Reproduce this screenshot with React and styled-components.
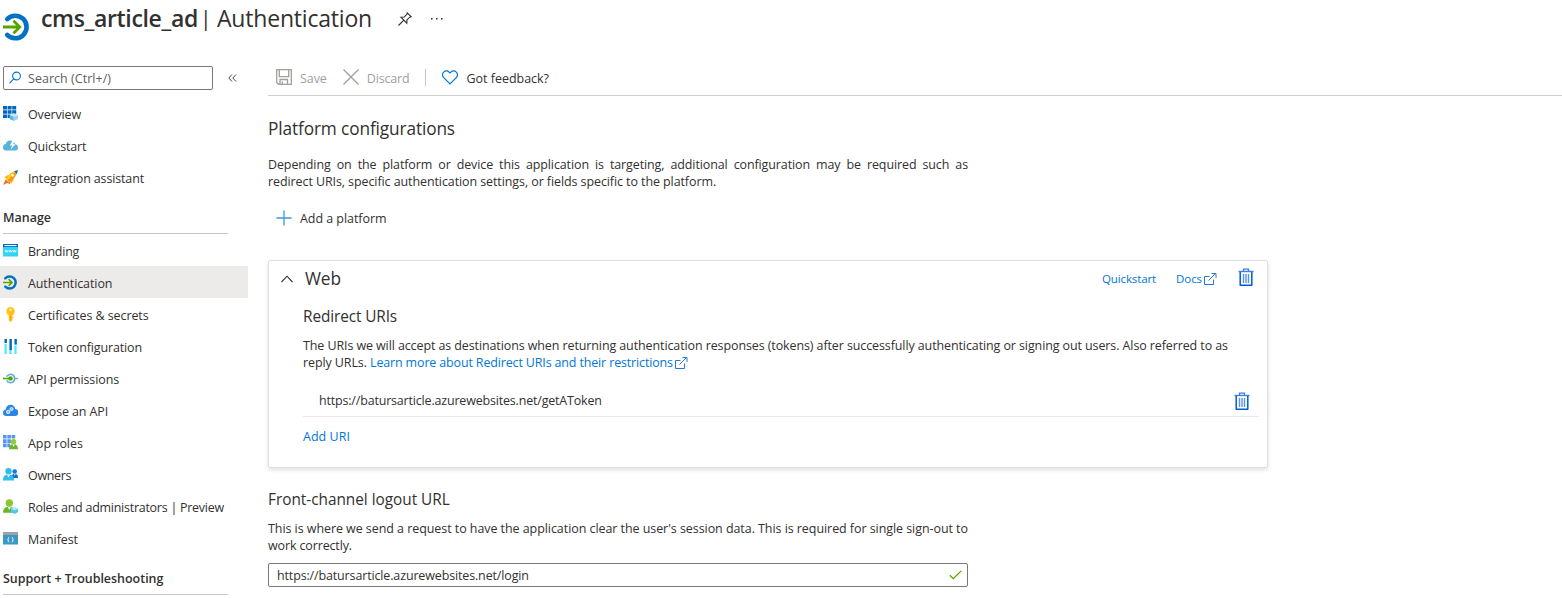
import React from 'react';
import styled, { createGlobalStyle } from 'styled-components';

const Global = createGlobalStyle`
  * { box-sizing: border-box; }
  body { margin: 0; background: #fff; color: #323130; font: 12.48px/17px "Open Sans", "Noto Sans", sans-serif; overflow: hidden; }
  h1, h2, h3, p, ul { margin: 0; padding: 0; font-weight: 400; }
  svg { display: block; flex: none; }
`;

const Page = styled.div`height: 598px; overflow: hidden; display: flex; flex-direction: column;`;

const Text = styled.span`
  letter-spacing: ${p => p.$ls ?? -0.1}px;
  white-space: nowrap;
`;

const TitleBar = styled.header`
  height: 62px;
  display: flex;
  align-items: flex-start;
  padding: 2px 0 0 3px;
`;
const Logo = styled.div`padding: 11px 10px 0 0;`;
const Title = styled.h1`
  font-size: 23.04px;
  line-height: 32px;
  white-space: pre;
  display: flex;
`;
const Strong = styled(Text)`font-weight: 600; width: 159px;`;
const Bar = styled(Text)`width: 17px; font-size: 21px;`;
const TitleActions = styled.div`
  display: flex;
  gap: 18px;
  align-items: center;
  height: 34px;
  padding-left: 25px;
`;

const Body = styled.div`display: flex; flex: 1; min-height: 0;`;

const Sidebar = styled.nav`width: 248px; flex: none; padding-top: 4px;`;
const SearchRow = styled.div`
  display: flex;
  align-items: center;
  gap: 15px;
  padding-left: 3px;
  margin-bottom: 7px;
`;
const SearchBox = styled.div`
  width: 210px;
  height: 24px;
  border: 1px solid #7a7977;
  border-radius: 2px;
  display: flex;
  align-items: center;
  gap: 7px;
  padding-left: 5px;
  color: #605e5c;
`;
const Item = styled.a`
  height: 32px;
  display: flex;
  align-items: center;
  gap: 10px;
  padding: 2px 0 0 3px;
  background: ${p => (p.$active ? '#edebe9' : 'transparent')};
  svg { margin-bottom: 2px; }
`;
const GroupTitle = styled.h2`
  width: 225px;
  height: 33px;
  margin: 8px 0 0 3px;
  padding-top: 8px;
  font-size: 12.48px;
  font-weight: 600;
  line-height: 17px;
  border-bottom: 1px solid #c8c6c4;
`;

const Main = styled.main`flex: 1; padding-left: 20px; min-width: 0;`;
const Toolbar = styled.div`
  height: 34px;
  border-bottom: 1px solid #d2d0ce;
  display: flex;
  align-items: center;
  padding: 0 0 3px 8px;
`;
const Command = styled.button`
  border: 0;
  background: none;
  padding: 0;
  margin-right: ${p => p.$gap ?? 0}px;
  font: inherit;
  color: ${p => (p.$disabled ? '#a19f9d' : '#323130')};
  display: flex;
  align-items: center;
  gap: 8px;
  height: 17px;
  ${Text} { padding-top: ${p => p.$drop ?? 2}px; }
`;
const Divider = styled.i`width: 1px; height: 17px; background: #c8c6c4; margin-right: 16px;`;

const SectionTitle = styled.h2`
  font-size: ${p => p.$size}px;
  line-height: 24px;
`;
const Intro = styled.div`padding: 21px 0 0;`;
const Paragraph = styled.p`width: ${p => p.$w}px; margin-top: ${p => p.$top}px;`;
const Line = styled.span`
  display: block;
  height: 17px;
  white-space: ${p => (p.$spread ? 'normal' : 'nowrap')};
  text-align-last: ${p => (p.$spread ? 'justify' : 'left')};
  letter-spacing: ${p => p.$ls ?? -0.1}px;
`;
const AddPlatform = styled.div`margin: 19px 0 34px 8px;`;

const Card = styled.section`
  width: 1000px;
  height: 208px;
  border: 1px solid #e1dfdd;
  border-radius: 2px;
  box-shadow: 0 2px 4px rgba(0, 0, 0, 0.13);
`;
const CardHeader = styled.div`
  height: 36px;
  display: flex;
  align-items: center;
  padding: 0 13px 0 12px;
`;
const CardTitle = styled.h2`font-size: 17.28px; line-height: 24px; margin: 0 auto 0 12px;`;
const CardActions = styled.div`display: flex; align-items: center; height: 32px; align-self: flex-start;`;
const Link = styled.a`
  color: #0078d4;
  display: inline-flex;
  align-items: center;
  gap: ${p => p.$gap ?? 1}px;
  font-size: ${p => (p.$small ? 11.52 : 12.48)}px;
  margin-right: ${p => p.$after ?? 0}px;
  padding-top: ${p => (p.$small ? 3 : 0)}px;
`;
const CardBody = styled.div`padding: 8px 8px 0 34px;`;
const UriRow = styled.div`
  height: 32px;
  margin-top: 14px;
  border-bottom: 1px solid #edebe9;
  display: flex;
  align-items: center;
  justify-content: space-between;
  padding: 0 9px 0 16px;
  svg { margin-top: 2px; }
`;
const AddUri = styled.div`padding-top: 11px;`;

const Logout = styled.section`padding-top: 20px;`;
const Field = styled.div`
  width: 700px;
  height: 24px;
  margin-top: 9px;
  border: 1px solid #7a7977;
  border-radius: 2px;
  display: flex;
  align-items: center;
  justify-content: space-between;
  padding: 0 5px 0 8px;
`;

const AuthIcon = ({ size }) => (
  <svg width={size} height={size} viewBox="0 0 28 28" fill="none">
    <path d="M4.2 6.1A11.3 11.3 0 1 1 4.2 21.9" stroke="#0072c6" strokeWidth="4.6" strokeLinecap="round" />
    <path d="M0 14h17M10.500 7.700l6.300 6.300-6.300 6.300" stroke="#57a300" strokeWidth="2.800" />
  </svg>
);

const icons = {
  overview: (
    <>
      <path fill="#0067c0" d="M0 0h4v3.6H0zM4.6 0h4v3.6h-4zM9.2 0h4v3.6h-4zM0 4.2h4v3.6H0zM4.6 4.2h4v3.6h-4zM0 8.4h4V12H0zM4.6 8.4h3V12h-3z" />
      <path fill="#0067c0" d="M9.2 4.2h4v3.6h-4z" />
      <path fill="#c5e8fa" d="M10.8 7.2l4.200 1.700-4.200 1.900-4.300-1.900z" />
      <path fill="#5db6e8" d="M6.500 8.9l4.300 1.900V15l-4.300-2z" />
      <path fill="#9bd3f2" d="M15 8.9l-4.200 1.900V15l4.200-2z" />
    </>
  ),
  quickstart: (
    <>
      <path fill="#59b4d9" d="M3.200 12.600A3.200 3.200 0 0 1 0 9.500c0-1.900 1.100-3.300 2.700-3.500C3.200 3.800 4.900 2.500 7 2.500c2.800 0 4.500 1.300 5 3.700 1.900.2 3 1.500 3 3.300a3.100 3.100 0 0 1-3.100 3.100z" />
      <path fill="#fff" d="M10.200 1.500L6.900 7.500h2.300l-1.500 4 4.700-5.300h-2.500l2.600-4.700z" />
    </>
  ),
  rocket: (
    <>
      <path fill="#ffb900" d="M1.200 7.300l3.600-2.300 3.700.2-4 4.500zM8 13.800l2.500-3.400.2-4-4.500 4.500z" />
      <path fill="#f7941d" d="M3 9C5.200 4.500 9 1.600 13.200.7l1.100 1.100c-.9 4.200-3.900 7.900-8.100 10.200z" />
      <path fill="#ffca28" d="M3 9C5.200 4.500 9 1.600 12.800 1.200L4.700 10.500z" />
      <path fill="#0072c6" d="M11.200 1.200L15 0l-1.200 3.900z" />
      <circle cx="9.700" cy="5.300" r="1.400" fill="#fff3c4" />
      <path fill="#f2711c" d="M2.600 9.400l3 2.900L0 15zM4 12.500l2.500-1 .8 3z" />
    </>
  ),
  branding: (
    <>
      <rect y="1.500" width="15" height="12" rx=".6" fill="#32d4f5" />
      <path fill="#0067c0" d="M.5 1h14a.5.5 0 0 1 .5.500V4H0V1.500A.5.5 0 0 1 .5 1z" />
      <path fill="#fff" d="M1.500 2h12v1.100h-12z" />
      <path fill="none" stroke="#fff" strokeWidth=".8" d="M2 7.200l.8 2 .8-2 .8 2 .8-2M6 7.200l.8 2 .8-2 .8 2 .8-2M10 7.200l.8 2 .8-2 .8 2 .8-2" />
    </>
  ),
  key: (
    <>
      <path fill="#ffc20e" d="M7.500 0a4.400 4.400 0 0 1 2 8.200v5L7.600 15 5.800 13.300v-5A4.400 4.400 0 0 1 7.500 0z" />
      <circle cx="7.500" cy="2.700" r="1.200" fill="#fff6d0" />
      <path fill="#f59b00" d="M6.900 8.300h.9v5h-.9zM9.400 10h1v1h-1z" />
    </>
  ),
  token: (
    <>
      <path fill="#50e6ff" d="M1.500 5h2.200v10H1.500zM6.400 11h2.200v4H6.400zM11.400 6.500h2.200V15h-2.200z" />
      <path fill="#0078d4" d="M1.500 0h2.200v4H1.500zM6.400 0h2.200v11H6.400zM11.400 0h2.200v5.500h-2.200z" />
      <path fill="#005ba1" d="M2.500 0h1.200v4H2.500zM7.500 0h1.100v11H7.500zM12.500 0h1.100v5.500h-1.100z" />
    </>
  ),
  permissions: (
    <>
      <path fill="none" stroke="#59b4d9" strokeWidth="1.600" d="M3.700 5.700a4.200 4.200 0 1 1 0 3.600M11.500 7.500H15" />
      <path fill="none" stroke="#57a300" strokeWidth="1.600" d="M0 7.500h7" />
      <circle cx="7.500" cy="7.500" r="2.300" fill="#57a300" />
    </>
  ),
  expose: (
    <>
      <path fill="#2a86e2" d="M3.400 13A3.400 3.400 0 0 1 0 9.700a3.400 3.400 0 0 1 2.900-3.300A4.900 4.900 0 0 1 7.400 1.800C10.100 1.800 11.900 3.500 12.200 6a3.500 3.500 0 0 1-.5 7z" />
      <g fill="#8fc2f5" stroke="#e3f1ff" strokeWidth="1"><circle cx="5.200" cy="8.900" r="1.700" /><circle cx="8.500" cy="6" r="1.500" /></g>
    </>
  ),
  roles: (
    <>
      <path fill="#5a96f0" d="M0 0h3.600v3.600H0zM4.300 0h3.600v3.600H4.300zM8.600 0h3.600v3.600H8.600zM0 4.300h3.600v3.600H0zM4.300 4.300h3.600v3.600H4.300zM0 8.600h3.600v3.600H0zM4.300 8.600h3v3.600h-3z" />
      <path fill="#6bb52b" d="M6 14.300c0-3 1.200-5 4.500-5s4.500 2 4.500 5z" />
      <circle cx="10.500" cy="6.700" r="2.700" fill="#8fcf2e" />
      <path fill="#fff" d="M9.300 9.500h2.400l-1.200 2.500z" />
    </>
  ),
  owners: (
    <>
      <path fill="#0f6fd0" d="M8.500 11c0-3 1-4.300 3.200-4.300S15 8 15 11z" />
      <circle cx="11.700" cy="4.600" r="2.300" fill="#0f78d4" />
      <path fill="#fff" d="M10.900 6.800h1.700l-.8 2z" />
      <path fill="#32bcec" d="M0 13.500c0-4 1.500-6 5.500-6s5.500 2 5.500 6z" />
      <circle cx="5.500" cy="4.300" r="3.200" fill="#32bcec" />
      <path fill="#fff" d="M4 7.600h3l-1.500 3.200z" />
    </>
  ),
  admins: (
    <>
      <path fill="#6bb52b" d="M0 13.700c0-4 2-6 6-6s5.500 2 5.500 6z" />
      <circle cx="6.300" cy="4" r="3.700" fill="#86c82d" />
      <path fill="#fff" d="M4.800 7.900h3L6.300 11z" />
      <path fill="#50c8ee" d="M11.500 8l3.500 1.700v3.600L11.500 15 8 13.300V9.700z" />
      <path fill="#b9ecfb" d="M11.500 8l3.500 1.700-3.500 1.600L8 9.700z" />
    </>
  ),
  manifest: (
    <>
      <path fill="#3999c6" d="M0 4h15v9.500H0z" />
      <path fill="#a0a1a2" d="M0 1h15v3H0z" />
      <path fill="none" stroke="#fff" strokeWidth=".9" d="M6.200 6.400c-1.100 0-.8.7-.8 1.300 0 .7-.2 1-.8 1 .6.100.8.400.8 1 0 .7-.3 1.400.8 1.400M8.800 6.400c1.100 0 .8.700.8 1.300 0 .7.2 1 .8 1-.6.100-.8.400-.8 1 0 .7.300 1.400-.8 1.400" />
    </>
  ),
};

const NavIcon = ({ name }) =>
  name === 'auth' ? <AuthIcon size={15} /> : <svg width="15" height="15" viewBox="0 0 15 15">{icons[name]}</svg>;

const External = () => (
  <svg width="14" height="14" viewBox="0 0 14 14" fill="none" stroke="#2b75d6" strokeWidth="1">
    <path d="M6.500 4.500h-5v8h9V7.500M5.500 8.500l7.500-7.500M8.500 1.500h4.500v4.500" />
  </svg>
);

const Trash = () => (
  <svg width="16" height="19" viewBox="0 0 16 19" fill="none">
    <path d="M5.500 3V1.200h5V3" stroke="#3f7fe0" strokeWidth="1.300" />
    <path d="M.5 3.500h15" stroke="#3f7fe0" strokeWidth="1.400" />
    <path d="M2.200 4v13.200h11.600V4" stroke="#015cda" strokeWidth="1.500" strokeLinejoin="round" />
    <path d="M5.500 6v9M8 6v9M10.500 6v9" stroke="#5b92e5" strokeWidth="1.400" />
  </svg>
);

const topItems = [
  ['overview', 'Overview', -0.13],
  ['quickstart', 'Quickstart', -0.17],
  ['rocket', 'Integration assistant', -0.13],
];
const manageItems = [
  ['branding', 'Branding', -0.22],
  ['auth', 'Authentication', -0.08],
  ['key', 'Certificates & secrets', -0.07],
  ['token', 'Token configuration', -0.13],
  ['permissions', 'API permissions', -0.11],
  ['expose', 'Expose an API', -0.11],
  ['roles', 'App roles', -0.02],
  ['owners', 'Owners', -0.3],
  ['admins', 'Roles and administrators | Preview', -0.25],
  ['manifest', 'Manifest', -0.07],
];

const NavItems = ({ items }) =>
  items.map(([icon, label, ls]) => (
    <Item key={label} $active={icon === 'auth'}>
      <NavIcon name={icon} />
      <Text $ls={ls}>{label}</Text>
    </Item>
  ));

export default function App() {
  return (
    <Page>
      <Global />
      <TitleBar>
        <Logo><AuthIcon size={28} /></Logo>
        <Title>
          <Strong $ls={-0.35}>cms_article_ad</Strong>
          <Bar $ls={0}>|</Bar>
          <Text $ls={-0.21}>Authentication</Text>
        </Title>
        <TitleActions>
          <svg width="16" height="16" viewBox="0 0 16 16" fill="none" stroke="#323130" strokeWidth="1.100">
            <path d="M10.200 1.800l4 4-1.500.4-2.700 2.700-.2 3.300-5.900-6 3.300-.2 2.700-2.700zM6.600 9.400L1.500 14.500" />
          </svg>
          <svg width="12" height="4" viewBox="0 0 12 4" fill="#323130">
            <path d="M0 1h1.500v1.500H0zM5 1h1.500v1.500H5zM10 1h1.500v1.500H10z" />
          </svg>
        </TitleActions>
      </TitleBar>
      <Body>
        <Sidebar>
          <SearchRow>
            <SearchBox>
              <svg width="12" height="14" viewBox="0 0 12 14" fill="none" stroke="#0078d4" strokeWidth="1.100">
                <circle cx="7.500" cy="5" r="3.900" /><path d="M4.700 7.900L.5 12.400" />
              </svg>
              <Text $ls={0.05}>Search (Ctrl+/)</Text>
            </SearchBox>
            <svg width="9" height="8" viewBox="0 0 9 8" fill="none" stroke="#484644">
              <path d="M4 .5L.8 4 4 7.500M8 .5L4.800 4 8 7.500" />
            </svg>
          </SearchRow>
          <NavItems items={topItems} />
          <GroupTitle><Text $ls={0}>Manage</Text></GroupTitle>
          <NavItems items={manageItems} />
          <GroupTitle><Text $ls={-0.01}>Support + Troubleshooting</Text></GroupTitle>
        </Sidebar>
        <Main>
          <Toolbar>
            <Command $disabled $gap={16}>
              <svg width="16" height="16" viewBox="0 0 16 16" fill="none" stroke="#a19f9d" strokeWidth="1.300">
                <path d="M.7.700h14.600v14.600H2.600L.7 13.400zM3.300.700v7h9.400v-7M4 15v-4.500h7.500V15M6.300 12.500V15" />
              </svg>
              <Text $ls={-0.05}>Save</Text>
            </Command>
            <Command $disabled $gap={16}>
              <svg width="16" height="16" viewBox="0 0 16 16" fill="none" stroke="#a19f9d" strokeWidth="1.300">
                <path d="M.5.500l15 15M15.500.500l-15 15" />
              </svg>
              <Text $ls={-0.16}>Discard</Text>
            </Command>
            <Divider />
            <Command>
              <svg width="16" height="15" viewBox="0 0 16 15" fill="none" stroke="#0078d4" strokeWidth="1.200">
                <path d="M8 13.900L1.700 7.600a3.800 3.800 0 0 1 0-5.500 3.800 3.800 0 0 1 5.400 0L8 3l.9-.9a3.800 3.800 0 0 1 5.400 0 3.800 3.800 0 0 1 0 5.500z" />
              </svg>
              <Text $ls={0}>Got feedback?</Text>
            </Command>
          </Toolbar>
          <Intro>
            <SectionTitle $size={17.28}><Text $ls={-0.13}>Platform configurations</Text></SectionTitle>
            <Paragraph $w={700} $top={15}>
              <Line $spread>Depending on the platform or device this application is targeting, additional configuration may be required such as</Line>
              <Line $ls={-0.08}>redirect URIs, specific authentication settings, or fields specific to the platform.</Line>
            </Paragraph>
          </Intro>
          <AddPlatform>
            <Command>
              <svg width="16" height="16" viewBox="0 0 16 16" stroke="#3c96e0" strokeWidth="1.300">
                <path d="M8 .5v15M.5 8h15" />
              </svg>
              <Text $ls={-0.04}>Add a platform</Text>
            </Command>
          </AddPlatform>
          <Card>
            <CardHeader>
              <svg width="12" height="8" viewBox="0 0 12 8" fill="none" stroke="#323130" strokeWidth="1.100">
                <path d="M.5 7L6 1.200 11.500 7" />
              </svg>
              <CardTitle><Text $ls={-0.07}>Web</Text></CardTitle>
              <CardActions>
                <Link $small $after={20}><Text $ls={-0.13}>Quickstart</Text></Link>
                <Link $small $after={21}><Text $ls={-0.07}>Docs</Text><External /></Link>
                <Trash />
              </CardActions>
            </CardHeader>
            <CardBody>
              <SectionTitle $size={15.36}><Text $ls={-0.1}>Redirect URIs</Text></SectionTitle>
              <Paragraph $w={930} $top={8}>
                <Line $ls={-0.092}>The URIs we will accept as destinations when returning authentication responses (tokens) after successfully authenticating or signing out users. Also referred to as</Line>
                <Line $ls={-0.09}>reply URLs. <Link><Text $ls={-0.14}>Learn more about Redirect URIs and their restrictions</Text><External /></Link></Line>
              </Paragraph>
              <UriRow>
                <Text $ls={-0.17}>https://batursarticle.azurewebsites.net/getAToken</Text>
                <Trash />
              </UriRow>
              <AddUri><Link><Text $ls={0.05}>Add URI</Text></Link></AddUri>
            </CardBody>
          </Card>
          <Logout>
            <SectionTitle $size={15.36}><Text $ls={-0.02}>Front-channel logout URL</Text></SectionTitle>
            <Paragraph $w={700} $top={8}>
              <Line $ls={-0.05}>This is where we send a request to have the application clear the user's session data. This is required for single sign-out to</Line>
              <Line $ls={-0.12}>work correctly.</Line>
            </Paragraph>
            <Field>
              <Text $ls={-0.13}>https://batursarticle.azurewebsites.net/login</Text>
              <svg width="13" height="10" viewBox="0 0 13 10" fill="none" stroke="#57a300" strokeWidth="1.300">
                <path d="M.8 5.200l3.400 3.400L12.300.900" />
              </svg>
            </Field>
          </Logout>
        </Main>
      </Body>
    </Page>
  );
}
